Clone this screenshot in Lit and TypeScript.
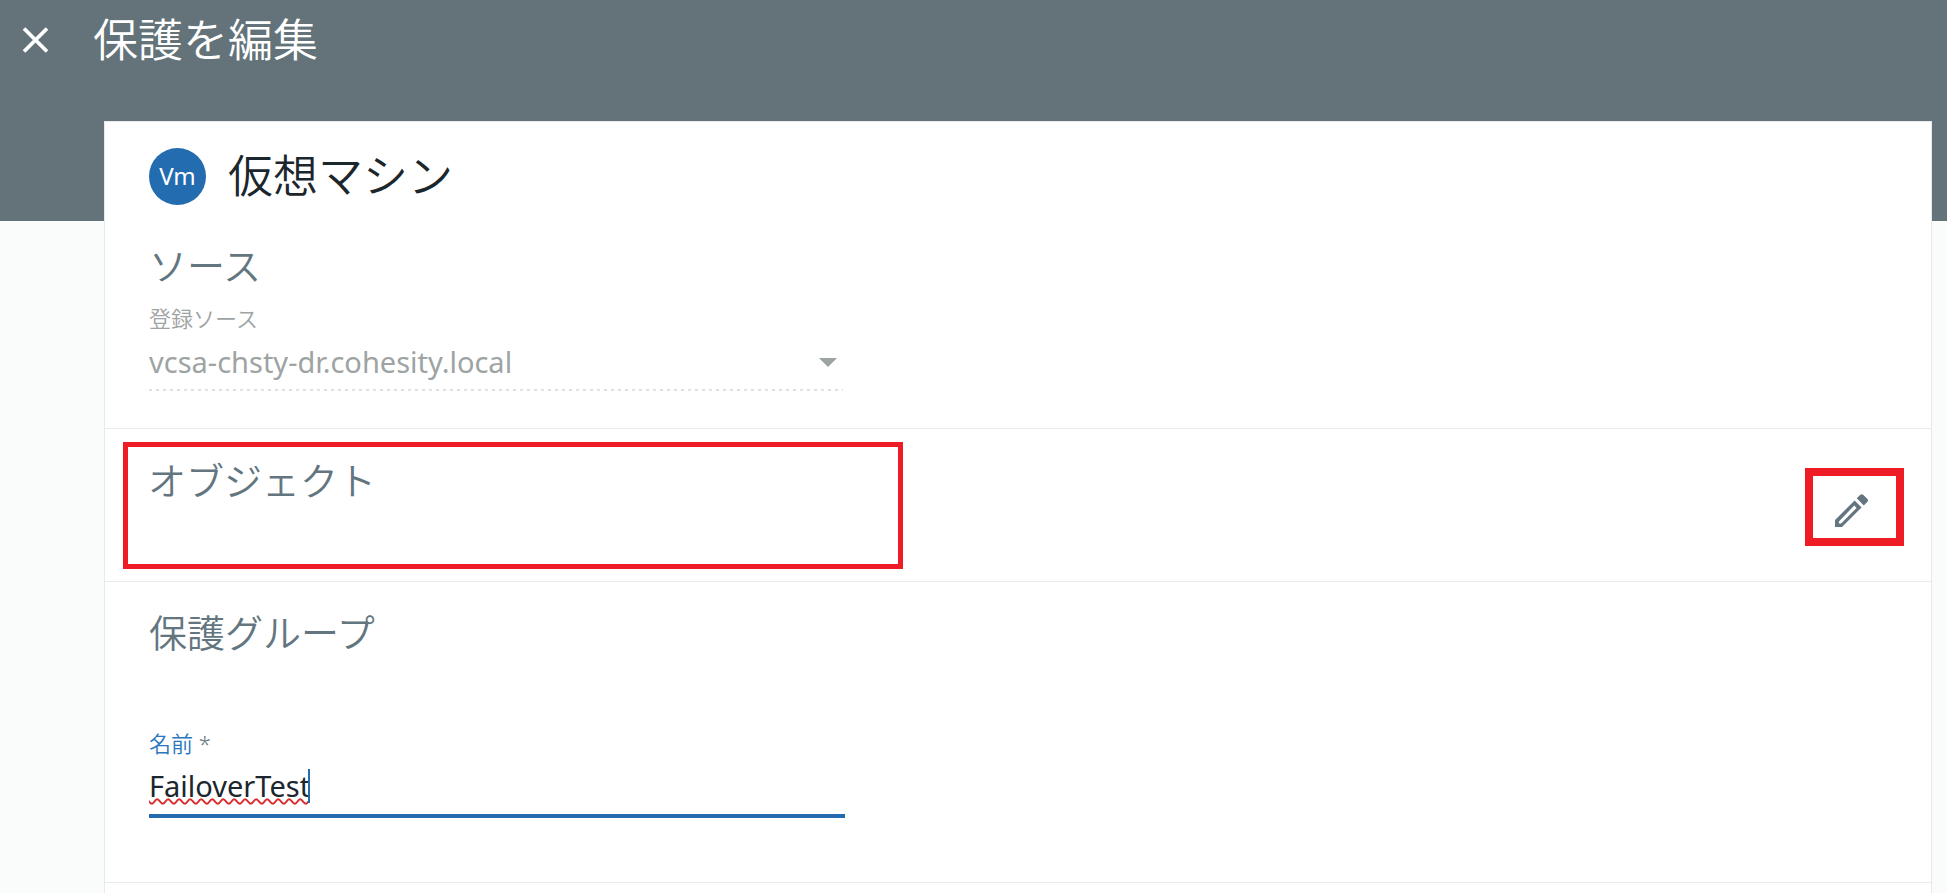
import { LitElement, html, css } from "lit";
import { customElement, state } from "lit/decorators.js";

@customElement("app-root")
export class AppRoot extends LitElement {
  static styles = css`
    :host {
      display: block;
      min-height: 100vh;
      background: linear-gradient(#637379 0 221px, #fafcfb 221px);
      color: #1b262d;
      font-family: "Noto Sans", "Noto Sans CJK JP", sans-serif;
      overflow: hidden;
    }
    *, *::before, *::after { box-sizing: border-box; }
    h1, h2, h3 { margin: 0; font-weight: 350; }
    button { padding: 0; border: 0; background: none; color: inherit; font: inherit; display: flex; }
    svg { display: block; }

    .bar {
      display: flex;
      align-items: center;
      gap: 44px;
      height: 80px;
      padding: 0 22px;
      color: #fff;
    }
    .bar h1, .type h2 { font-size: 45px; line-height: 60px; }

    .card {
      margin: 41px 15px 0 104px;
      border: 1px solid #e8eaeb;
      border-bottom: 0;
      background: #fff;
      min-height: calc(100vh - 121px);
    }
    .section { padding: 24px 44px; border-bottom: 1px solid #e8eaeb; }
    .section h3 { color: #637680; font-size: 38px; line-height: 52px; }

    .source { height: 307px; }
    .type { display: flex; align-items: center; gap: 22px; height: 60px; margin-bottom: 33px; }
    .badge {
      display: grid;
      place-items: center;
      width: 57px;
      height: 57px;
      padding-bottom: 2px;
      border-radius: 50%;
      background: #246cb0;
      color: #fff;
      font-size: 24px;
    }

    .field { display: flex; flex-direction: column; max-width: 696px; }
    .field label { font-size: 22px; line-height: 30px; font-weight: 350; }
    .pick label { color: #9ea3a3; margin-top: 12px; }
    .control { display: flex; align-items: center; height: 58px; }
    .select { position: relative; }
    .select::after {
      content: "";
      position: absolute;
      inset: auto 2px 0 0;
      height: 2px;
      background: linear-gradient(90deg, #e0e1e1 0 3px, transparent 3px) 0 0 / 7px 2px;
    }
    select {
      appearance: none;
      width: 100%;
      padding: 0;
      border: 0;
      background: none;
      color: #9ea3a3;
      opacity: 1;
      font: inherit;
      font-size: 29px;
      line-height: 42px;
    }
    .arrow { position: absolute; right: 8px; pointer-events: none; }

    .objects {
      display: flex;
      justify-content: space-between;
      align-items: flex-start;
      height: 153px;
      padding: 13px 27px 0 18px;
    }
    .marked {
      flex: 0 1 780px;
      height: 127px;
      padding: 7px 20px;
      border: 5px solid #ee1c25;
    }
    .edit {
      justify-content: center;
      align-items: center;
      width: 99px;
      height: 78px;
      margin-top: 26px;
      padding: 6px 6px 0 0;
      border: 8px solid #ee1c25;
      color: #637680;
    }

    .group { height: 301px; }
    .name { margin-top: 70px; }
    .name label { color: #2b76bc; }
    .name label span { color: #637680; }
    .text { height: 60px; border-bottom: 4px solid #246cb0; }
    input {
      field-sizing: content;
      padding: 0;
      border: 0;
      outline: 0;
      background: none;
      color: inherit;
      font: inherit;
      font-size: 29px;
      line-height: 42px;
      text-decoration: underline wavy #d9292b 2px;
      text-underline-offset: 1px;
    }
    .caret { width: 2px; height: 34px; margin-left: -2px; background: #246cb0; }
  `;

  @state() private name = "FailoverTest";

  render() {
    return html`
      <header class="bar">
        <button aria-label="閉じる">
          <svg width="27" height="26" viewBox="0 0 26 26" fill="none" stroke="currentColor" stroke-width="3.8">
            <path d="M1.5 1.5l23 23M24.5 1.5l-23 23" />
          </svg>
        </button>
        <h1>保護を編集</h1>
      </header>
      <main class="card">
        <section class="section source">
          <div class="type">
            <span class="badge">Vm</span>
            <h2>仮想マシン</h2>
          </div>
          <h3>ソース</h3>
          <div class="field pick">
            <label for="source">登録ソース</label>
            <div class="control select">
              <select id="source" disabled>
                <option>vcsa-chsty-dr.cohesity.local</option>
              </select>
              <svg class="arrow" width="18" height="9" viewBox="0 0 18 9"><path d="M0 0h18L9 9z" fill="#9ea3a3" /></svg>
            </div>
          </div>
        </section>
        <section class="section objects">
          <div class="marked"><h3>オブジェクト</h3></div>
          <button class="edit" aria-label="編集">
            <svg width="33" height="33" viewBox="0 0 33 33" fill="currentColor">
              <path fill-rule="evenodd" d="M0 26L19.6 6.4l7 7L7 33H0zM3.9 27.4v2.2h2.2L21.6 13.9 19.2 11.6z" />
              <path d="M21.8 4.2l3.2-3.2q1.8-1.6 3.4 0l3.8 3.8q1.6 1.6 0 3.2l-3.4 3.4z" />
            </svg>
          </button>
        </section>
        <section class="section group">
          <h3>保護グループ</h3>
          <div class="field name">
            <label for="name">名前 <span>*</span></label>
            <div class="control text">
              <input
                id="name"
                type="text"
                required
                spellcheck="false"
                .value=${this.name}
                @input=${(e: Event) => (this.name = (e.target as HTMLInputElement).value)}
              />
              <span class="caret"></span>
            </div>
          </div>
        </section>
      </main>
    `;
  }
}
